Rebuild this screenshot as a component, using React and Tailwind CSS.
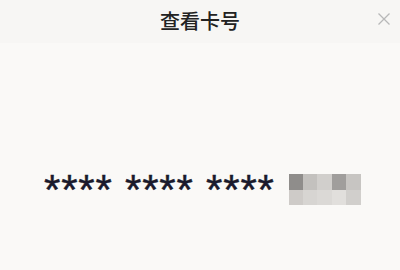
import React from "react";

const blocks = [
  ["#8f8d8b", "#c3c1be", "#d1cfcc", "#a09e9c", "#c7c5c2"],
  ["#cecbc8", "#d7d5d2", "#dbd9d6", "#e1dfdc", "#d1cfcc"],
];

export default function App() {
  return (
    <div className="w-[400px] h-[270px] bg-[#faf9f7] flex flex-col relative overflow-hidden" style={{ fontFamily: '"Noto Sans CJK SC", "Liberation Sans", sans-serif' }}>
      <div className="h-[43px] bg-[#f7f6f4] flex items-center justify-center shrink-0 pb-[2px]">
        <span className="text-[20px] font-medium text-[#222222] leading-none">查看卡号</span>
      </div>
      <button className="absolute right-[10px] top-[13px] w-[12px] h-[12px]">
        <svg viewBox="0 0 12 12" width="12" height="12" fill="none" stroke="#b8b8b8" strokeWidth="1.3">
          <path d="M0.5 0.5 L11.5 11.5 M11.5 0.5 L0.5 11.5" />
        </svg>
      </button>
      <div className="flex items-start pl-[44px] pt-[126px]">
        <span className="text-[42px] leading-none text-[#1a1a2c] tracking-[0.8px] whitespace-pre [-webkit-text-stroke:0.45px_#1a1a2c]" style={{ fontFamily: '"Liberation Sans", sans-serif' }}>**** **** ****</span>
        <div className="ml-[14px] mt-[5px] flex flex-col">
          {blocks.map((row, i) => (
            <div key={i} className="flex">
              {row.map((c, j) => (
                <div key={j} className="w-[14.4px] h-[15.5px]" style={{ backgroundColor: c }} />
              ))}
            </div>
          ))}
        </div>
      </div>
    </div>
  );
}
